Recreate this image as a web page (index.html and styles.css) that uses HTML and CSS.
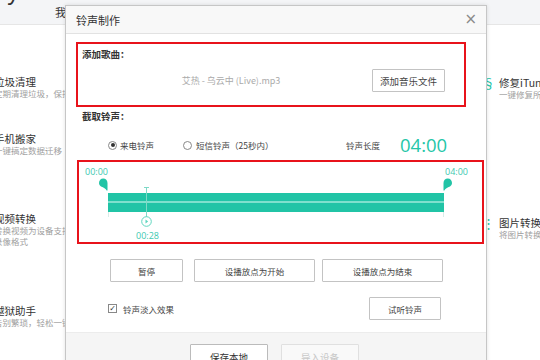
FILE: index.html
```html
<!DOCTYPE html>
<html lang="zh">
<head>
<meta charset="utf-8">
<title>铃声制作</title>
<link rel="stylesheet" href="styles.css">
</head>
<body>
<div class="app">
  <div class="topbar"><span class="brand">ly</span><span class="tab">我的设备</span></div>
  <div class="main">
    <div class="col-left">
      <div class="item i1"><div class="t">垃圾清理</div><div class="s">定期清理垃圾，保持流畅</div></div>
      <div class="item i2"><div class="t">手机搬家</div><div class="s">一键搞定数据迁移</div></div>
      <div class="item i3"><div class="t">视频转换</div><div class="s">转换视频为设备支持的</div><div class="s">录像格式</div></div>
      <div class="item i4"><div class="t">越狱助手</div><div class="s">告别繁琐，轻松一键越狱</div></div>
    </div>
    <div class="col-right">
      <div class="ritem ri1"><span class="ico">§</span><div><div class="t">修复iTunes</div><div class="s">一键修复所有问题</div></div></div>
      <div class="ritem ri2"><span class="ico">⋮</span><div><div class="t">图片转换</div><div class="s">将图片转换格式</div></div></div>
    </div>
  </div>

  <div class="dialog">
    <div class="dlg-head"><span class="dlg-title">铃声制作</span><span class="close">×</span></div>
    <div class="dlg-body">
      <div class="box1">
        <div class="label">添加歌曲：</div>
        <div class="file-row">
          <span class="fname">艾热 - 乌云中 (Live).mp3</span>
          <button class="btn btn-add">添加音乐文件</button>
        </div>
      </div>
      <div class="label sec">截取铃声：</div>
      <div class="radio-row">
        <span class="radio on"></span><span class="rtext rt1">来电铃声</span>
        <span class="radio rb2"></span><span class="rtext rt2">短信铃声（25秒内）</span>
        <span class="lenlabel">铃声长度</span>
        <span class="len">04:00</span>
      </div>
      <div class="box2">
        <span class="tl-label tl-start">00:00</span>
        <span class="tl-label tl-end">04:00</span>
        <svg class="mk mk-l" width="9" height="13" viewBox="0 0 9 13"><path d="M4.2 0.5 C6.8 0.5 8.5 2.4 8.5 5 L8.5 12.5 L7.6 12.5 C7 10.5 4.5 9.5 2 8.4 C0.8 7.6 0 6.4 0 5 C0 2.4 1.8 0.5 4.2 0.5 Z" fill="#22c4a6"/></svg>
        <svg class="mk mk-r" width="9" height="13" viewBox="0 0 9 13"><path d="M4.8 0.5 C2.2 0.5 0.5 2.4 0.5 5 L0.5 12.5 L1.4 12.5 C2 10.5 4.5 9.5 7 8.4 C8.2 7.6 9 6.4 9 5 C9 2.4 7.2 0.5 4.8 0.5 Z" fill="#22c4a6"/></svg>
        <div class="bar"><div class="bar-line"></div></div>
        <span class="tick tk-l"></span><span class="tick tk-r"></span>
        <div class="head">
          <span class="head-cap"></span>
          <span class="head-line"></span>
          <svg class="head-play" width="11" height="11" viewBox="0 0 11 11"><circle cx="5.5" cy="5.5" r="4.8" fill="#fff" stroke="#5fd6bf" stroke-width="1"/><path d="M4.5 3.6 L7.2 5.5 L4.5 7.4 Z" fill="#5fd6bf"/></svg>
          <span class="head-time">00:28</span>
        </div>
      </div>
      <div class="btn-row">
        <button class="btn btn-pause">暂停</button>
        <button class="btn btn-wide">设播放点为开始</button>
        <button class="btn btn-wide">设播放点为结束</button>
      </div>
      <div class="check-row">
        <span class="check">✓</span><span class="ctext">铃声淡入效果</span>
        <button class="btn btn-listen">试听铃声</button>
      </div>
    </div>
    <div class="dlg-foot">
      <button class="btn btn-save">保存本地</button>
      <button class="btn btn-import">导入设备</button>
    </div>
  </div>
</div>
</body>
</html>
```

FILE: styles.css
```css
* { box-sizing: border-box; }
html, body { margin: 0; padding: 0; }
body {
  width: 540px;
  height: 360px;
  overflow: hidden;
  font-family: "Noto Sans CJK SC", "Noto Sans", sans-serif;
  background: #fff;
  color: #333;
}
.app { position: relative; width: 540px; height: 360px; overflow: hidden; }

.topbar {
  height: 25px;
  background: #f4f5f7;
  border-bottom: 1px solid #e6e6e6;
  position: relative;
}
.brand {
  position: absolute;
  left: 2px;
  top: -22px;
  font-size: 24px;
  color: #333;
  font-family: "Liberation Sans", sans-serif;
}
.tab {
  position: absolute;
  left: 55px;
  top: 5px;
  font-size: 11px;
  line-height: 14px;
  color: #333;
}

.main { display: flex; justify-content: space-between; }
.col-left { width: 70px; overflow: hidden; padding-top: 50px; }
.col-left .item { margin-left: -6px; white-space: nowrap; }
.t { font-size: 10.5px; line-height: 13px; color: #333; white-space: nowrap; }
.s { font-size: 8.5px; line-height: 11px; color: #a0a0a0; white-space: nowrap; }
.i2 { margin-top: 33px; }
.i3 { margin-top: 56px; }
.i4 { margin-top: 57px; }

.col-right { width: 58px; overflow: hidden; padding-top: 51px; }
.ritem { display: flex; gap: 9px; white-space: nowrap; }
.ritem .ico { color: #22c4a6; font-size: 13px; line-height: 14px; width: 8px; margin-left: 0; }
.ri2 { margin-top: 116px; }

.dialog {
  position: absolute;
  left: 65px;
  top: 5px;
  width: 422px;
  height: 370px;
  background: #fff;
  border: 1px solid #c6c6c6;
  box-shadow: 0 0 4px rgba(0,0,0,0.12);
  display: flex;
  flex-direction: column;
}
.dlg-head {
  height: 28px;
  background: #f8f8f8;
  border-bottom: 1px solid #e2e2e2;
  display: flex;
  align-items: center;
  justify-content: space-between;
  padding: 0 9px 0 10px;
}
.dlg-title { font-size: 11px; color: #333; }
.close { font-size: 15px; color: #8a8a8a; font-family: "DejaVu Sans", sans-serif; line-height: 1; }

.dlg-body { padding-left: 10px; }
.box1 {
  margin-top: 8px;
  width: 390px;
  height: 65px;
  border: 2px solid #e8131b;
  padding: 3px 0 0 4px;
}
.label { font-size: 9.5px; line-height: 14px; font-weight: bold; color: #333; }
.file-row {
  display: flex;
  align-items: center;
  margin-top: 8px;
}
.fname {
  flex: 1;
  text-align: center;
  padding-left: 8px;
  font-size: 9px;
  color: #aaa;
  white-space: nowrap;
}
.btn {
  font-family: "Noto Sans CJK SC", sans-serif;
  font-size: 8.5px;
  color: #444;
  background: #fff;
  border: 1px solid #c3c3c3;
  border-radius: 1px;
  height: 23px;
  padding: 0;
}
.btn-add { width: 73px; margin-right: 19px; font-size: 9.5px; }

.sec { margin-top: 2px; padding-left: 6px; }
.radio-row {
  display: flex;
  align-items: center;
  height: 20px;
  margin-top: 12px;
  padding-left: 32px;
  font-size: 8.5px;
  color: #444;
}
.radio {
  width: 9px; height: 9px;
  border: 1px solid #888;
  border-radius: 50%;
  position: relative;
  flex: none;
}
.radio.on::after {
  content: "";
  position: absolute;
  left: 1.5px; top: 1.5px;
  width: 4px; height: 4px;
  border-radius: 50%;
  background: #333;
}
.rtext { margin-left: 3px; white-space: nowrap; }
.rt1 { width: 34px; }
.rt2 { margin-left: 4px; width: 76px; }
.radio.rb2 { margin-left: 29px; }
.lenlabel { margin-left: 74px; width: 34px; white-space: nowrap; }
.len {
  margin-left: 20px;
  font-family: "Open Sans", "Noto Sans", sans-serif;
  font-size: 18.5px;
  color: #25c6a8;
  line-height: 20px;
}

.box2 {
  position: relative;
  margin-top: 5px;
  margin-left: 1px;
  width: 407px;
  height: 84px;
  border: 2px solid #e8131b;
}
.tl-label {
  position: absolute;
  top: 4px;
  font-family: "Open Sans", "Noto Sans", sans-serif;
  font-size: 9px;
  line-height: 12px;
  color: #3dc9b0;
}
.tl-start { left: 6px; }
.tl-end { left: 366px; }
.mk { position: absolute; top: 16px; }
.mk-l { left: 20px; }
.mk-r { left: 364px; }
.bar {
  position: absolute;
  left: 29px;
  top: 31px;
  width: 336px;
  height: 19px;
  background: #21c4a6;
}
.bar-line {
  position: absolute;
  left: 0; right: 0;
  top: 8px;
  height: 2px;
  background: #7fe0cd;
}
.tick {
  position: absolute;
  top: 50px;
  width: 1px;
  height: 5px;
  background: #d8ece8;
}
.tk-l { left: 29px; }
.tk-r { left: 364px; }
.head {
  position: absolute;
  left: 63px;
  top: 24px;
  width: 10px;
  height: 56px;
}
.head-cap {
  position: absolute;
  left: 2px; top: 1px;
  width: 5px; height: 1px;
  background: #7fd9c7;
}
.head-line {
  position: absolute;
  left: 4px; top: 1px;
  width: 1px; height: 30px;
  background: #7fd9c7;
}
.head-play { position: absolute; left: -1px; top: 30px; }
.head-time {
  position: absolute;
  left: -6px;
  top: 44px;
  font-family: "Open Sans", "Noto Sans", sans-serif;
  font-size: 9px;
  line-height: 12px;
  color: #3dc9b0;
}

.btn-row {
  display: flex;
  margin-top: 15px;
  padding-left: 34px;
}
.btn-pause { width: 73px; }
.btn-wide { width: 121px; margin-left: 11px; }
.btn-wide + .btn-wide { margin-left: 7px; }

.check-row {
  display: flex;
  align-items: center;
  margin-top: 15px;
  padding-left: 32px;
  font-size: 8.5px;
  color: #444;
}
.check {
  width: 9px; height: 9px;
  border: 1px solid #888;
  font-size: 8px;
  line-height: 7px;
  text-align: center;
  color: #333;
  font-family: "DejaVu Sans", sans-serif;
}
.ctext { margin-left: 6px; }
.btn-listen { width: 72px; margin-left: auto; margin-right: 45px; }

.dlg-foot {
  margin-top: 12px;
  flex: 1;
  background: #f5f5f5;
  border-top: 1px solid #ececec;
  display: flex;
  justify-content: center;
  gap: 13px;
  padding-top: 11px;
  padding-right: 3px;
}
.btn-save { width: 78px; height: 26px; font-size: 9.5px; color: #333; border-color: #bbb; }
.btn-import { width: 78px; height: 26px; font-size: 9.5px; color: #c8c8c8; border-color: #e0e0e0; background: #f9f9f9; }
```
